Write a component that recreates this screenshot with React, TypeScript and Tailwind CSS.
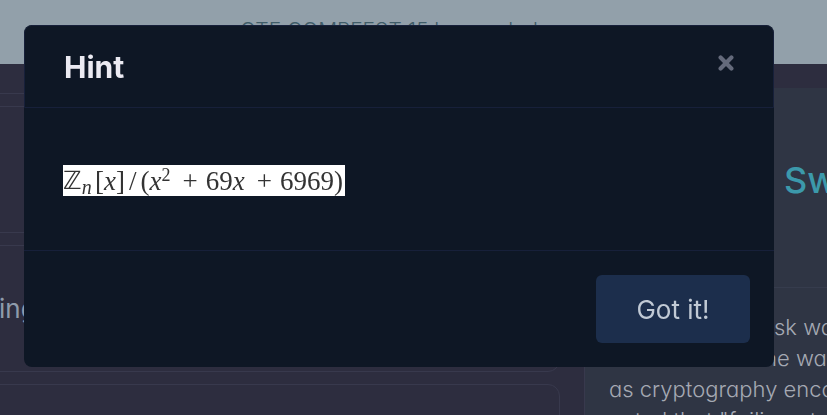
import React from 'react';

const paragraph = [
  { text: 'sk was', pad: 'pl-[165px]' },
  { text: 'he way', pad: 'pl-[155px]' },
  { text: 'as cryptography encodes', pad: 'pl-0' },
  { text: 'noted that "failing at', pad: 'pl-0' },
];

function Card({ children }: { children?: React.ReactNode }) {
  return (
    <section className="flex h-[127px] shrink-0 items-center rounded-xl border border-[#38394d] text-[26px] text-[#8f9bab]">
      {children}
    </section>
  );
}

function Formula() {
  return (
    <div className="flex h-[31px] w-[282px] items-center bg-white font-['Liberation_Serif',serif] text-[27px] leading-[30px] whitespace-nowrap text-[#333]">
      <span className="w-8">
        <span className="font-['DejaVu_Sans',sans-serif] text-[25px]">ℤ</span>
        <sub className="text-[20px] leading-none italic">n</sub>
      </span>
      <span>[<i>x</i>]</span>
      <span className="ml-1">/</span>
      <span className="ml-1">
        (<i>x</i>
        <sup className="text-[18px] leading-none">2</sup>
      </span>
      <span className="ml-3">+</span>
      <span className="ml-2">69<i>x</i></span>
      <span className="ml-3">+</span>
      <span className="ml-2">6969)</span>
    </div>
  );
}

function HintDialog() {
  return (
    <div className="fixed inset-0 pt-[25px] pr-[53px] pl-6">
      <div
        role="dialog"
        aria-modal="true"
        aria-labelledby="hint-title"
        className="w-full max-w-[750px] overflow-hidden rounded-lg bg-[#0e1725]"
      >
        <header className="flex h-[83px] items-center justify-between rounded-t-lg border border-[#17203a] px-[39px]">
          <h2 id="hint-title" className="text-[30px] leading-10 font-bold text-[#ebeaf2]">
            Hint
          </h2>
          <button type="button" aria-label="Close" className="pb-2 text-[#646a7b]">
            <svg viewBox="0 0 16 16" className="size-4" fill="none" stroke="currentColor" strokeWidth="4.2" strokeLinecap="round">
              <path d="M2.6 2.6 13.4 13.4M13.4 2.6 2.6 13.4" />
            </svg>
          </button>
        </header>
        <div className="px-[39px] pt-[57px] pb-[54px]">
          <Formula />
        </div>
        <footer className="flex justify-end border-t border-[#17203a] p-6">
          <button type="button" className="h-[68px] w-[154px] rounded-md bg-[#1c2e4c] text-[26px] text-[#c1cad5]">
            Got it!
          </button>
        </footer>
      </div>
    </div>
  );
}

export default function App() {
  return (
    <div className="flex h-screen flex-col overflow-hidden bg-[#2d2d3f] font-[Inter,sans-serif] [font-feature-settings:'cv11']">
      <header className="h-16 shrink-0 bg-[#92a0aa] pt-[17px] text-center text-[21px] leading-7 font-light text-[#3f5c68]">
        <p className="pr-[43px]">CTF COMPFEST 15 has ended.</p>
      </header>
      <div className="flex min-h-0 flex-1">
        <main className="-ml-6 flex min-w-0 flex-1 flex-col gap-3 overflow-hidden pr-6">
          <div className="h-[30px] shrink-0 rounded-b-xl border border-t-0 border-[#38394d]" />
          <Card />
          <Card><span className="pl-[22px]">ing</span></Card>
          <Card />
        </main>
        <aside className="mt-6 w-[243px] shrink-0 overflow-hidden border-l border-[#38394d] bg-[#2f3544]">
          <h2 className="flex h-[200px] items-center border-b border-[#363c4d] pb-4 pl-[199px] text-4xl font-medium text-[#3c99ab]">
            Swag
          </h2>
          <div className="pt-6 pl-6 text-[22px] leading-[31px] font-light whitespace-nowrap text-[#a5a9b3]">
            {paragraph.map((line) => (
              <p key={line.text} className={line.pad}>{line.text}</p>
            ))}
          </div>
        </aside>
      </div>
      <HintDialog />
    </div>
  );
}
